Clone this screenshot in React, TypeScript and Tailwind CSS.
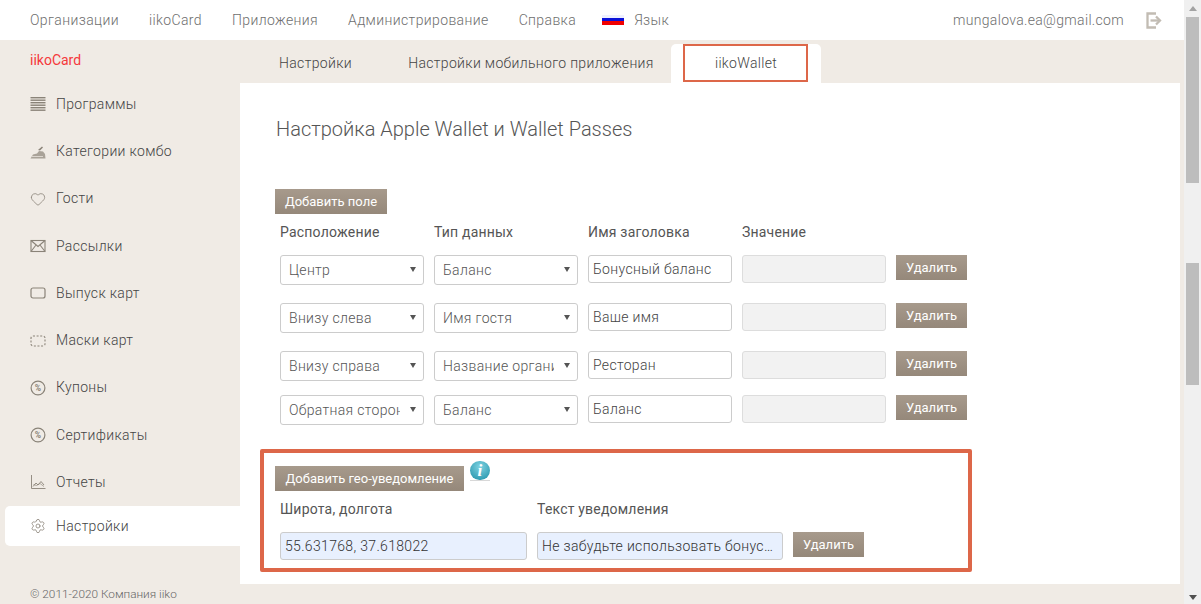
import { Heart, Settings } from "lucide-react";
import type { ReactNode } from "react";

const topLinks = ["Организации", "iikoCard", "Приложения", "Администрирование", "Справка"];

const ICON_COLOR = "#8a8378";

function LinesIcon() {
  return (
    <svg width="16" height="16" viewBox="0 0 16 16" fill={ICON_COLOR}>
      {[1, 3.5, 6, 8.5, 11, 13.5].map((y) => (
        <rect key={y} x="0.5" y={y} width="15" height="1.4" />
      ))}
    </svg>
  );
}

function ComboIcon() {
  return (
    <svg width="16" height="16" viewBox="0 0 16 16" fill={ICON_COLOR}>
      <path d="M0.5 14.5 L3 10.5 L7 9.5 L9 7 L13 7.5 L15 10 L15.5 14.5 Z" opacity="0.7" />
      <path d="M8 6 L12 2.5 L13 3.5 L10 6.5 Z" />
      <path d="M2 12.5 H13" stroke="#f0ebe5" strokeWidth="0.7" />
    </svg>
  );
}

function MailIcon() {
  return (
    <svg width="16" height="16" viewBox="0 0 16 16" fill="none" stroke={ICON_COLOR} strokeWidth="1.1">
      <rect x="1" y="2.5" width="14" height="11" />
      <path d="M1 2.5 L8 8.5 L15 2.5 M1 13.5 L6 7 M15 13.5 L10 7" />
    </svg>
  );
}

function CardIcon() {
  return (
    <svg width="16" height="16" viewBox="0 0 16 16" fill="none" stroke={ICON_COLOR} strokeWidth="1.2">
      <rect x="1" y="3" width="14" height="10" rx="2" />
    </svg>
  );
}

function MaskIcon() {
  return (
    <svg width="16" height="16" viewBox="0 0 16 16" fill="none" stroke={ICON_COLOR} strokeWidth="1.1" strokeDasharray="2 1.6">
      <rect x="1" y="3" width="14" height="10" rx="2" />
    </svg>
  );
}

function PercentIcon() {
  return (
    <svg width="16" height="16" viewBox="0 0 16 16" fill="none">
      <circle cx="8" cy="8" r="6.9" stroke={ICON_COLOR} strokeWidth="1.2" />
      <text x="8" y="11" textAnchor="middle" fontSize="8.5" fontWeight="700" fill={ICON_COLOR} fontFamily="Roboto, sans-serif">
        %
      </text>
    </svg>
  );
}

function ReportIcon() {
  return (
    <svg width="16" height="16" viewBox="0 0 16 16" fill="none" stroke={ICON_COLOR} strokeWidth="0.9">
      <path d="M1.5 1 V14.5 H15.5" />
      <path d="M3 12.5 L6 9 L8 11 L11 7.5 L14 11" />
      <path d="M3.5 10.5 L6.5 11.5 L10 9.5 L14 12.5" opacity="0.7" />
    </svg>
  );
}

function LogoutIcon() {
  return (
    <svg width="16" height="17" viewBox="0 0 16 17" fill="none" stroke="#c2bcb3" strokeWidth="2.3">
      <path d="M10 1.5 H1.5 V15.5 H10" />
      <path d="M4.5 8.5 H13.5" />
      <path d="M10 4.5 L14 8.5 L10 12.5" />
    </svg>
  );
}

const sideItems: { label: string; icon: ReactNode }[] = [
  { label: "Программы", icon: <LinesIcon /> },
  { label: "Категории комбо", icon: <ComboIcon /> },
  { label: "Гости", icon: <Heart size={16} strokeWidth={1.2} color={ICON_COLOR} /> },
  { label: "Рассылки", icon: <MailIcon /> },
  { label: "Выпуск карт", icon: <CardIcon /> },
  { label: "Маски карт", icon: <MaskIcon /> },
  { label: "Купоны", icon: <PercentIcon /> },
  { label: "Сертификаты", icon: <PercentIcon /> },
  { label: "Отчеты", icon: <ReportIcon /> },
];

const rows = [
  { place: "Центр", type: "Баланс", title: "Бонусный баланс", height: "h-[48px]" },
  { place: "Внизу слева", type: "Имя гостя", title: "Ваше имя", height: "h-[48px]" },
  { place: "Внизу справа", type: "Название организации", title: "Ресторан", height: "h-[44px]" },
  { place: "Обратная сторона", type: "Баланс", title: "Баланс", height: "h-[48px]" },
];

const brownButton =
  "bg-gradient-to-b from-[#a79a8c] to-[#95887a] text-white text-[13px] font-normal tracking-normal h-[25px] shrink-0";

function Select({ value }: { value: string }) {
  return (
    <div className="relative w-[144px] h-[30px] shrink-0">
      <select
        defaultValue={value}
        className="w-full h-full appearance-none border border-[#ccc] rounded-[3px] bg-white pl-[8px] pr-[23px] text-[14px] font-light text-[#555]"
      >
        <option>{value}</option>
      </select>
      <div className="absolute right-[8px] top-[12px] w-0 h-0 border-x-[3.5px] border-x-transparent border-t-[5px] border-t-[#555] pointer-events-none" />
    </div>
  );
}

function App() {
  return (
    <div className="flex w-[1201px] h-[604px] overflow-hidden bg-[#f0ebe5] text-[14px] font-light text-[#444] tracking-[0.33px] font-['Roboto',sans-serif]">
      <div className="flex flex-col w-[1184px]">
        {/* Top bar */}
        <header className="flex items-center h-[40px] bg-white pl-[30px] pr-[22px] shrink-0 text-[#6e6e6e]">
          <nav className="flex items-center gap-[30px] tracking-[0.38px]">
            {topLinks.map((link) => (
              <span key={link}>{link}</span>
            ))}
            <span className="flex items-center gap-[10px] ml-[-4px]">
              <span className="flex flex-col w-[22px] h-[10px]">
                <span className="h-[3px] bg-[#eef0ff]" />
                <span className="h-[3px] bg-[#0b12d8]" />
                <span className="h-[4px] bg-[#f00000]" />
              </span>
              <span>Язык</span>
            </span>
          </nav>
          <span className="ml-auto">mungalova.ea@gmail.com</span>
          <span className="ml-[22px]">
            <LogoutIcon />
          </span>
        </header>

        <div className="flex flex-1 min-h-0">
          {/* Sidebar */}
          <aside className="relative flex flex-col w-[240px] shrink-0">
            <div className="pl-[30px] pt-[10px] h-[40.8px] text-[#f5383b] font-normal tracking-normal">iikoCard</div>
            {sideItems.map((item) => (
              <div key={item.label} className="flex items-center h-[47.25px] pl-[30px] gap-[10px] shrink-0">
                {item.icon}
                <span>{item.label}</span>
              </div>
            ))}
            <div className="flex items-center h-[40px] ml-[5px] pl-[25px] gap-[10px] bg-white rounded-l-[5px]">
              <Settings size={16} strokeWidth={1.2} color={ICON_COLOR} />
              <span>Настройки</span>
            </div>
            <div className="mt-auto pl-[30px] text-[11.8px] tracking-normal text-[#666]">© 2011-2020 Компания iiko</div>
          </aside>

          {/* Content */}
          <main className="flex flex-col w-[940px] shrink-0">
            <div className="relative flex h-[43px] pt-[4px] pl-[11px] shrink-0">
              <div className="flex items-center justify-center w-[129px]">Настройки</div>
              <div className="flex items-center justify-center w-[291px] pl-[11px]">Настройки мобильного приложения</div>
              <div className="relative flex items-center justify-center w-[150px] bg-white rounded-t-[5px]">
                iikoWallet
                <div className="absolute left-[12px] top-0 w-[125px] h-[38px] border-2 border-[#dd6749]" />
              </div>
            </div>

            <div className="bg-white h-[501px] pl-[20px] shrink-0">
              <h1 className="ml-[16px] mt-[34px] h-[72px] text-[20px] leading-[24px] font-light text-[#555] tracking-normal">
                Настройка Apple Wallet и Wallet Passes
              </h1>
              <button className={`${brownButton} ml-[15px] w-[112px]`}>Добавить поле</button>

              <div className="flex ml-[20px] h-[41px] pb-[4px] items-center gap-[10px] font-normal text-[#555] tracking-[0.2px]">
                <span className="w-[144px]">Расположение</span>
                <span className="w-[144px]">Тип данных</span>
                <span className="w-[144px]">Имя заголовка</span>
                <span className="w-[144px]">Значение</span>
              </div>

              {rows.map((row) => (
                <div key={row.title} className={`flex ml-[20px] gap-[10px] items-start ${row.height}`}>
                  <Select value={row.place} />
                  <Select value={row.type} />
                  <input
                    defaultValue={row.title}
                    className="w-[144px] h-[28px] px-[4px] border border-[#ccc] rounded-[3px] text-[#444]"
                  />
                  <input
                    disabled
                    className="w-[144px] h-[28px] border border-[#ddd] rounded-[3px] bg-[#f2f2f2]"
                  />
                  <button className={`${brownButton} w-[71px]`}>Удалить</button>
                </div>
              ))}

              <section className="w-[712px] h-[123px] mt-[6px] border-4 border-[#dd6749] rounded-[2px] pl-[11px] pt-[8px]">
                <div className="flex items-start h-[30px]">
                  <button className={`${brownButton} w-[189px] mt-[5px]`}>Добавить гео-уведомление</button>
                  <div className="ml-[6px] flex flex-col items-center">
                    <div className="flex items-center justify-center w-[20px] h-[19px] rounded-full bg-[radial-gradient(circle_at_50%_30%,#7fd3e2,#1c8ea6)] text-white font-['Liberation_Serif',serif] italic font-bold text-[17px] leading-none">
                      i
                    </div>
                    <div className="w-[20px] h-[1px] bg-[#d8d8d8]" />
                  </div>
                </div>
                <div className="flex ml-[5px] h-[37px] items-center font-normal text-[#555] tracking-[0.2px]">
                  <span className="w-[257px]">Широта, долгота</span>
                  <span>Текст уведомления</span>
                </div>
                <div className="flex ml-[5px] items-start gap-[10px] mt-[4px]">
                  <input
                    defaultValue="55.631768, 37.618022"
                    className="w-[247px] h-[28px] px-[4px] border border-[#ccc] rounded-[3px] bg-[#e8f0fe] text-[#333]"
                  />
                  <input
                    defaultValue="Не забудьте использовать бонусы при оплате заказа"
                    className="w-[246px] h-[28px] px-[4px] border border-[#ccc] rounded-[3px] bg-[#e8f0fe] text-[#333] truncate"
                  />
                  <button className={`${brownButton} w-[71px]`}>Удалить</button>
                </div>
              </section>
            </div>
          </main>
        </div>
      </div>

      {/* Scrollbar */}
      <div className="flex flex-col items-center w-[17px] h-full bg-[#f0f0f0] shrink-0">
        <div className="mt-[6px] w-0 h-0 border-x-[4px] border-x-transparent border-b-[5px] border-b-[#a3a3a3]" />
        <div className="mt-[6px] w-[13px] h-[166px] bg-[#bdbdbd]" />
        <div className="mt-[80px] w-[13px] h-[122px] bg-[#bdbdbd]" />
        <div className="mt-auto mb-[4px] w-0 h-0 border-x-[4px] border-x-transparent border-t-[5px] border-t-[#505050]" />
      </div>
    </div>
  );
}

export default App;
